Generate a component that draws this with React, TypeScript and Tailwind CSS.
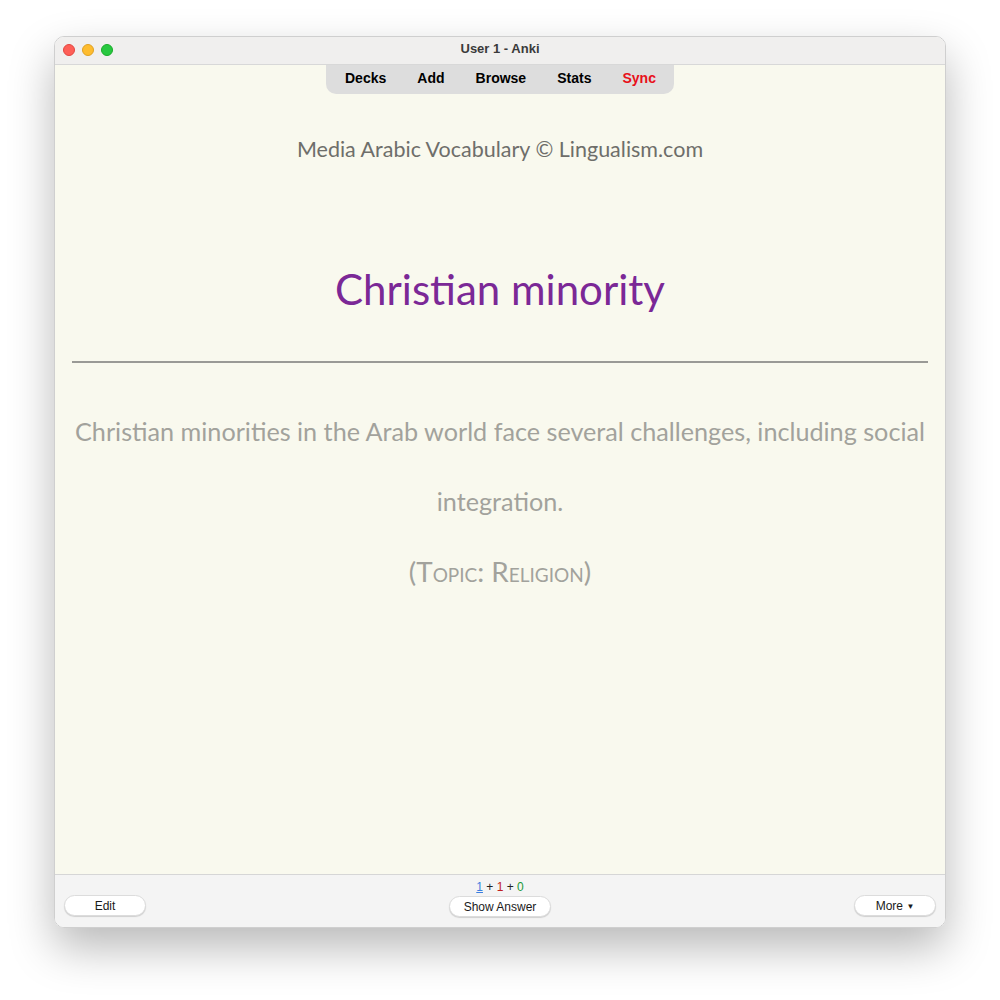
import React from "react";

const sans = { fontFamily: "Lato, 'Noto Sans', sans-serif" };
const ui = { fontFamily: "'Liberation Sans', Arial, sans-serif" };

function TrafficLights() {
  return (
    <div className="absolute left-[8px] top-[7px] flex gap-[7px]">
      <span className="block h-[12px] w-[12px] rounded-full bg-[#fe5f57] border border-[#e14640]" />
      <span className="block h-[12px] w-[12px] rounded-full bg-[#febc2e] border border-[#dea123]" />
      <span className="block h-[12px] w-[12px] rounded-full bg-[#28c840] border border-[#1aab29]" />
    </div>
  );
}

function Pill({ children, className = "" }: { children: React.ReactNode; className?: string }) {
  return (
    <button
      className={`h-[21px] rounded-full bg-white border border-[#dcdcdc] shadow-[0_1px_1px_rgba(0,0,0,0.15)] text-[12px] text-[#1a1a1a] leading-none ${className}`}
      style={ui}
    >
      {children}
    </button>
  );
}

export default function App() {
  return (
    <div className="min-h-[1000px] w-[1000px] bg-white pt-[36px] pl-[54px]">
      <div className="w-[892px] h-[892px] rounded-[10px] overflow-hidden border border-[#cfcfcf] shadow-[0_20px_45px_rgba(0,0,0,0.28)] flex flex-col">
        {/* title bar */}
        <div className="relative h-[28px] shrink-0 bg-[#f0efee] border-b border-[#d8d8d8] flex items-center justify-center pb-[3px]">
          <TrafficLights />
          <span className="text-[13px] font-bold text-[#3a3a3a]" style={ui}>
            User 1 - Anki
          </span>
        </div>

        {/* card area */}
        <div className="flex-1 bg-[#f9f9ee] flex flex-col items-center px-[17px]">
          <nav
            className="w-[348px] h-[29px] bg-[#dddddd] rounded-b-[10px] flex items-center justify-between pl-[19px] pr-[18px] pb-[2px] text-[14px] font-bold text-black"
            style={ui}
          >
            <span>Decks</span>
            <span>Add</span>
            <span>Browse</span>
            <span>Stats</span>
            <span className="text-[#e8101a]">Sync</span>
          </nav>

          <div className="mt-[39px] text-[21.5px] text-[#6e6e6a]" style={sans}>
            Media Arabic Vocabulary © Lingualism.com
          </div>

          <div className="mt-[103px] text-[42px] text-[#7b2896] leading-none" style={sans}>
            Christian minority
          </div>

          <hr className="mt-[51px] w-full border-0 border-t-2 border-[#9a9a96]" />

          <p
            className="mt-[33px] w-full text-center text-[25.2px] leading-[70px] text-[#a2a29c]"
            style={sans}
          >
            Christian minorities in the Arab world face several challenges, including social integration.
          </p>

          <p className="mt-[22px] text-[27.8px] text-[#a2a29c] leading-none" style={{ ...sans, fontVariant: "small-caps" }}>
            (Topic: Religion)
          </p>
        </div>

        {/* bottom bar */}
        <div className="relative h-[53px] shrink-0 bg-[#f4f4f4] border-t border-[#d6d6d6]">
          <div className="absolute left-0 right-0 top-[6px] text-center text-[12px] leading-none" style={ui}>
            <span className="text-[#3b7ee0] underline">1</span>
            <span className="text-[#222]"> + </span>
            <span className="text-[#c02020]">1</span>
            <span className="text-[#222]"> + </span>
            <span className="text-[#1a9a3a]">0</span>
          </div>
          <div className="h-full flex items-end justify-between px-[9px] pb-[11px]">
            <Pill className="w-[82px]">Edit</Pill>
            <Pill className="w-[102px] mb-[-1px]">Show Answer</Pill>
            <Pill className="w-[82px]">
              More <span className="text-[8px] align-middle">▼</span>
            </Pill>
          </div>
        </div>
      </div>
    </div>
  );
}
